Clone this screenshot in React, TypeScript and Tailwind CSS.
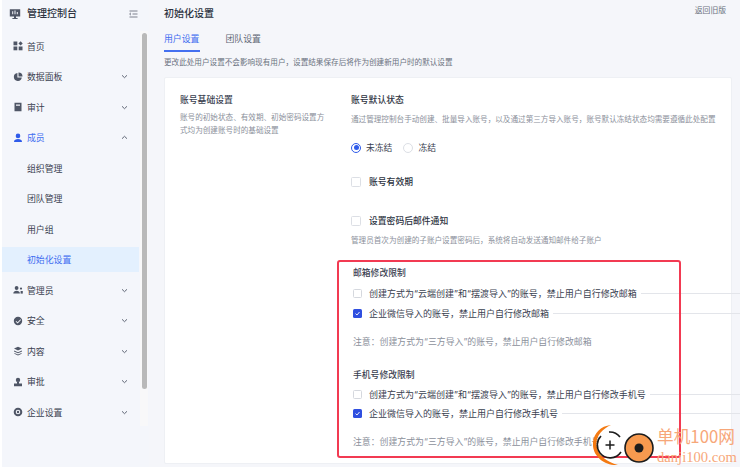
import React from "react";

const Chevron = ({ up = false }: { up?: boolean }) => (
  <svg width="7" height="5" viewBox="0 0 7 5" className="ml-auto mr-[11px]" fill="none" stroke="#5f6675" strokeWidth="1">
    <path d={up ? "M1 3.7 3.5 1.3 6 3.7" : "M1 1.3 3.5 3.7 6 1.3"} />
  </svg>
);

const I = ({ children, c = "#4f5666" }: { children: React.ReactNode; c?: string }) => (
  <svg width="10" height="10" viewBox="0 0 10 10" fill={c} className="mr-[6px] shrink-0">
    {children}
  </svg>
);

const icons: Record<string, React.ReactNode> = {
  home: (
    <I>
      <rect x="0.5" y="0.5" width="3.8" height="3.8" />
      <rect x="0.5" y="5.5" width="3.8" height="3.8" />
      <rect x="5.7" y="5.5" width="3.8" height="3.8" />
      <path d="M7.6.3 9.7 2.4 7.6 4.5 5.5 2.4Z" />
    </I>
  ),
  chart: (
    <I>
      <path d="M4.4 1a4 4 0 1 0 4.4 4.6H4.4Z" />
      <path d="M5.5.4v4h4a4 4 0 0 0-4-4Z" />
    </I>
  ),
  audit: (
    <I>
      <path fillRule="evenodd" d="M1.5.8h7v8.4h-7ZM3 2.5v1.2h4V2.5Z" />
    </I>
  ),
  member: (
    <I c="#2f5bea">
      <circle cx="5" cy="2.9" r="2.3" />
      <path d="M1 9c0-2.2 1.8-3 4-3s4 .8 4 3Z" />
    </I>
  ),
  admin: (
    <I>
      <circle cx="3.6" cy="3" r="1.9" />
      <path d="M.3 8.6c0-2 1.5-2.8 3.3-2.8s3.3.8 3.3 2.8Z" />
      <circle cx="8" cy="3.6" r="1.1" />
      <path d="M7.6 6h2.2v2.6H7.6Z" />
    </I>
  ),
  safe: (
    <I>
      <path fillRule="evenodd" d="M5 .8a4.2 4.2 0 1 0 0 8.4A4.2 4.2 0 0 0 5 .8Zm2.4 2.5L4.6 6.2 3.2 5 2.6 5.6l2 2 3.4-3.7Z" />
    </I>
  ),
  content: (
    <I>
      <path d="M5 .8 9 2.6 5 4.4 1 2.6Z" />
      <path d="M1 4.6 5 6.2 9 4.6V5.6L5 7.2 1 5.6Z" />
      <path d="M1.4 7 5 8.4 8.6 7V7.8L5 9.4 1.4 7.8Z" />
    </I>
  ),
  approve: (
    <I>
      <circle cx="5" cy="2.9" r="2.2" />
      <path d="M4 5h2v1.6h3v2.6H1V6.6h3Z" />
    </I>
  ),
  company: (
    <I>
      <path fillRule="evenodd" d="M5 .7a4.3 4.3 0 1 0 0 8.6A4.3 4.3 0 0 0 5 .7Zm0 2a2.3 2.3 0 1 1 0 4.6 2.3 2.3 0 0 1 0-4.6Z" />
      <circle cx="5" cy="5" r="1.2" />
    </I>
  ),
};

const Item = ({ icon, label, arrow, up, blue }: { icon: string; label: string; arrow?: boolean; up?: boolean; blue?: boolean }) => (
  <div className={`flex items-center h-[30.5px] pl-[11px] text-[8.9px] ${blue ? "text-[#3f6df0]" : "text-[#3a4150]"}`}>
    {icons[icon]}
    <span className="ml-[-2px]">{label}</span>
    {arrow && <Chevron up={up} />}
  </div>
);

const Sub = ({ label, active }: { label: string; active?: boolean }) => (
  <div className="h-[30.5px] flex items-center">
    <div className={`w-full flex items-center h-[25px] pl-[25px] text-[8.9px] ${active ? "bg-[#e3f0fe] text-[#3f6df0]" : "text-[#3a4150]"}`}>{label}</div>
  </div>
);

const Box = ({ checked }: { checked?: boolean }) =>
  checked ? (
    <span className="w-[9px] h-[9px] rounded-[1.5px] bg-[#2f4fe0] flex items-center justify-center shrink-0">
      <svg width="7" height="7" viewBox="0 0 7 7" fill="none" stroke="#fff" strokeWidth="0.9">
        <path d="M1.5 3.6 3 5 5.5 2" />
      </svg>
    </span>
  ) : (
    <span className="w-[9px] h-[9px] rounded-[1.5px] border border-[#d5d8de] bg-white shrink-0" />
  );

const CheckLine = ({ label, checked }: { label: string; checked?: boolean }) => (
  <div className="flex items-center h-[20px] pl-[2px]">
    <Box checked={checked} />
    <span className="ml-[7px] text-[9px] text-[#3a4150] whitespace-nowrap">{label}</span>
    <span className="flex-1 h-px bg-[#e3e5ea] ml-[4px]" />
  </div>
);

const Toggle = ({ label }: { label: string }) => (
  <div className="flex items-center">
    <span className="w-[10px] h-[10px] rounded-[1.5px] border border-[#dcdfe5] bg-white shrink-0" />
    <span className="ml-[8px] text-[8.8px] font-medium text-[#2c3240]">{label}</span>
  </div>
);

export default function App() {
  return (
    <div className="relative w-[740px] h-[467px] flex overflow-hidden bg-[#f5f6fa] [font-family:'Inter','Noto_Sans_CJK_SC','Noto_Sans',sans-serif]">
      <div className="w-[2px] bg-white shrink-0" />
      <aside className="w-[147px] shrink-0 flex flex-col bg-[#f4f6fb]">
        <div className="flex items-center h-[27px] pl-[7px]">
          <svg width="12" height="12" viewBox="0 0 12 12" className="mr-[6px]">
            <path d="M.8 1.2h10.4v7.4H7v1.4h1.6v1H3.4v-1H5V8.6H.8Z" fill="#4f5666" />
            <path d="M3.2 3.2h1v3h-1ZM5.5 2.6h1v3.6h-1ZM7.8 4h1v2.2h-1Z" fill="#f4f6fb" />
          </svg>
          <span className="text-[10px] font-medium text-[#2c3240]">管理控制台</span>
          <svg width="9" height="8" viewBox="0 0 9 8" className="ml-[52px]" fill="none" stroke="#5f6675" strokeWidth="0.8">
            <path d="M.5 1h8M3.5 4h5M.5 7h8M2 2.8.6 4 2 5.2" />
          </svg>
        </div>
        <div className="flex flex-1 min-h-0 mt-[4px]">
          <div className="w-[137px] shrink-0">
            <Item icon="home" label="首页" />
            <Item icon="chart" label="数据面板" arrow />
            <Item icon="audit" label="审计" arrow />
            <Item icon="member" label="成员" arrow up blue />
            <Sub label="组织管理" />
            <Sub label="团队管理" />
            <Sub label="用户组" />
            <Sub label="初始化设置" active />
            <Item icon="admin" label="管理员" arrow />
            <Item icon="safe" label="安全" arrow />
            <Item icon="content" label="内容" arrow />
            <Item icon="approve" label="审批" arrow />
            <Item icon="company" label="企业设置" arrow />
          </div>
          <div className="w-[8px] h-[395px] bg-[#f8f8f9] ml-[1px] px-[1.5px] pt-[2px]">
            <div className="w-[5px] h-[356px] rounded-full bg-[#b9b9b9]" />
          </div>
        </div>
      </aside>

      <main className="flex-1 min-w-0 pl-[15px] flex flex-col">
        <div className="flex justify-between h-[27px] items-center">
          <h1 className="text-[10px] font-medium text-[#2c3240]">初始化设置</h1>
          <span className="text-[7.8px] text-[#6b7280] mr-[14px] -mt-[6px]">返回旧版</span>
        </div>
        <div className="flex gap-[26px] h-[25px] text-[8.9px] text-[#5f6675]">
          <div className="h-[25px] pt-[5px] border-b-2 border-[#4470f0] text-[#3f6df0]">用户设置</div>
          <div className="pt-[5px]">团队设置</div>
        </div>
        <p className="mt-[5px] h-[20px] text-[7.6px] leading-[11px] text-[#6b7280] whitespace-nowrap">更改此处用户设置不会影响现有用户，设置结果保存后将作为创建新用户时的默认设置</p>
        <section className="w-[568px] h-[387px] bg-white rounded-[2px] border border-[#eef0f4] flex">
          <div className="w-[186px] shrink-0 pl-[15px] pt-[15px]">
            <h2 className="text-[8.8px] leading-[13px] font-medium text-[#3a4150]">账号基础设置</h2>
            <p className="w-[150px] mt-[6px] text-[7.6px] leading-[12.5px] text-[#8b909b]">账号的初始状态、有效期、初始密码设置方式均为创建账号时的基础设置</p>
          </div>
          <div className="w-[389px] shrink-0 pt-[15px]">
            <h2 className="text-[8.8px] leading-[13px] font-medium text-[#2c3240]">账号默认状态</h2>
            <p className="mt-[8px] text-[7.6px] leading-[11px] text-[#8b909b] whitespace-nowrap">通过管理控制台手动创建、批量导入账号，以及通过第三方导入账号，账号默认冻结状态均需要遵循此处配置</p>
            <div className="mt-[16px] h-[13px] flex items-center">
              <span className="w-[10px] h-[10px] rounded-full border border-[#2f5bea] flex items-center justify-center">
                <span className="w-[5px] h-[5px] rounded-full bg-[#2f5bea]" />
              </span>
              <span className="ml-[5px] text-[8.8px] text-[#3a4150]">未冻结</span>
              <span className="ml-[11px] w-[10px] h-[10px] rounded-full border border-[#dcdfe5]" />
              <span className="ml-[5px] text-[8.8px] text-[#3a4150]">冻结</span>
            </div>
            <div className="mt-[21px]"><Toggle label="账号有效期" /></div>
            <div className="mt-[26px]"><Toggle label="设置密码后邮件通知" /></div>
            <p className="mt-[8px] text-[7.6px] leading-[11px] text-[#8b909b] whitespace-nowrap">管理员首次为创建的子账户设置密码后，系统将自动发送通知邮件给子账户</p>

            <h3 className="mt-[20px] pl-[2px] text-[8.8px] leading-[13px] font-medium text-[#3a4150]">邮箱修改限制</h3>
            <div className="mt-[4px]">
              <CheckLine label="创建方式为“云端创建”和“摆渡导入”的账号，禁止用户自行修改邮箱" />
              <CheckLine label="企业微信导入的账号，禁止用户自行修改邮箱" checked />
            </div>
            <p className="mt-[13px] pl-[2px] text-[8.9px] leading-[11px] text-[#8b909b] whitespace-nowrap">注意：创建方式为“三方导入”的账号，禁止用户自行修改邮箱</p>

            <h3 className="mt-[21px] pl-[2px] text-[8.8px] leading-[13px] font-medium text-[#3a4150]">手机号修改限制</h3>
            <div className="mt-[3px]">
              <CheckLine label="创建方式为“云端创建”和“摆渡导入”的账号，禁止用户自行修改手机号" />
              <div className="-mt-px"><CheckLine label="企业微信导入的账号，禁止用户自行修改手机号" checked /></div>
            </div>
            <p className="mt-[13px] pl-[2px] text-[8.9px] leading-[11px] text-[#8b909b] whitespace-nowrap">注意：创建方式为“三方导入”的账号，禁止用户自行修改手机号</p>
          </div>
        </section>
      </main>

      <div className="absolute left-[337px] top-[260px] w-[344px] h-[198px] border-2 border-[#f23a52] rounded-[3px]" />

      <div className="absolute left-[593px] top-[424px] w-[147px] h-[43px]">
        <svg width="66" height="43" viewBox="0 0 66 43" className="absolute left-0 top-0">
          <path d="M18 1C6 2-1 12 0 22c1 11 12 20 25 19C14 38 4 31 3.500 21 3 12 9 5 18 1Z" fill="#f47a12" />
          <circle cx="17" cy="21" r="12.500" fill="#fff" />
          <path d="M16 8a13 13 0 0 1 11 5M28 28a13 13 0 0 1-21 1 13 13 0 0 1 1-17" fill="none" stroke="#1c1c1c" strokeWidth="1.6" />
          <path d="M12.500 21h9M17 16.500v9" stroke="#1c1c1c" strokeWidth="1.5" />
          <circle cx="46" cy="24" r="14" fill="#f79a4f" stroke="#1c1c1c" strokeWidth="1.6" />
          <circle cx="46" cy="24" r="4.500" fill="#1c1c1c" />
        </svg>
        <div className="absolute left-[64px] top-[1px] text-[16.7px] leading-[22px] text-[#f7a779] whitespace-nowrap [font-family:'Noto_Sans_CJK_SC','Liberation_Serif',serif]">单机100网</div>
        <div className="absolute left-[64px] top-[25px] text-[14.6px] leading-[16px] text-[#f7a779] whitespace-nowrap [font-family:'Liberation_Serif',serif]">danji100.com</div>
      </div>
    </div>
  );
}
